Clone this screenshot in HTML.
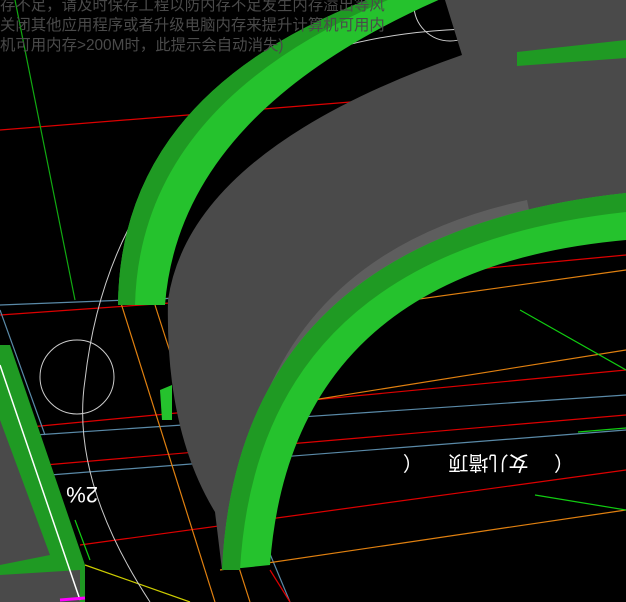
<!DOCTYPE html>
<html><head><meta charset="utf-8"><style>
html,body{margin:0;padding:0;background:#000;width:626px;height:602px;overflow:hidden}
svg{display:block}
.t{font-family:"Liberation Sans","Noto Sans CJK SC",sans-serif;font-size:15.4px;fill:#4a4a4a}
</style></head><body>
<svg width="626" height="602" viewBox="0 0 626 602">
<rect width="626" height="602" fill="#000"/>
<g stroke-width="1.2" fill="none">
<path d="M0,130 L626,80" stroke="#d00"/>
<path d="M0,315 L170,303" stroke="#d00"/>
<path d="M30,427 L626,370" stroke="#d00"/>
<path d="M45,465 L626,415" stroke="#d00"/>
<path d="M80,545 L626,470" stroke="#d00"/>
<path d="M150,300 L626,255" stroke="#d00"/>
<path d="M0,305 L180,298" stroke="#5a8aa8"/>
<path d="M35,435 L626,395" stroke="#5a8aa8"/>
<path d="M50,475 L626,430" stroke="#5a8aa8"/>
<path d="M0,310 L45,435" stroke="#5a8aa8"/>
<path d="M260,530 L290,602" stroke="#5a8aa8"/>
<path d="M120,300 L215,602" stroke="#e08010"/>
<path d="M155,305 L250,602" stroke="#e08010"/>
<path d="M220,570 L626,510" stroke="#e08010"/>
<path d="M250,410 L626,350" stroke="#e08010"/>
<path d="M270,320 L626,270" stroke="#e08010"/>
<path d="M270,570 L290,602" stroke="#d00"/>
<path d="M85,565 L190,602" stroke="#cc0"/>
<path d="M0,465 L35,462" stroke="#ee0"/>
<path d="M520,310 L626,370" stroke="#1c1"/>
<path d="M535,495 L626,510" stroke="#1c1"/>
<path d="M578,432 L626,428" stroke="#1c1"/>
<path d="M15,0 L75,300" stroke="#1a1"/>
<path d="M75,520 L90,560" stroke="#1c1"/>
</g>
<g stroke="#ccc" stroke-width="1" fill="none">
<circle cx="77" cy="377" r="37"/>
<circle cx="450" cy="5" r="36"/>
<path d="M150,602 Q70,480 85,380 Q110,160 300,60 Q430,10 626,40"/>
</g>
<path d="M445,0 L626,0 L626,195 Q240,240 222,570 L215,512 Q165,430 168,300 Q190,150 462,55 Z" fill="#4a4a4a"/>
<path d="M517,52 L626,40 L626,58 L517,66 Z" fill="#1f9a23"/>
<path d="M527,200 Q268,255 238,505 L248,500 Q283,268 529,210 Z" fill="#5e5e5e"/>
<path d="M118,305 Q120,90 380,-5 L450,-5 Q180,110 165,305 Z" fill="#25c22d"/>
<path d="M118,305 Q120,90 380,-5 L400,-5 Q140,100 135,305 Z" fill="#1f9a23"/>
<path d="M160,390 L172,385 L172,420 L162,420 Z" fill="#25c22d"/>
<path d="M222,570 Q238,235 626,193 L626,240 Q292,270 270,565 Z" fill="#25c22d"/>
<path d="M222,570 Q238,235 626,193 L626,212 Q258,252 240,570 Z" fill="#1f9a23"/>
<path d="M0,345 L10,345 L85,565 L85,602 L0,602 Z" fill="#1f9a23"/>
<path d="M0,420 L50,555 L0,565 Z" fill="#4a4a4a"/>
<path d="M0,575 L80,570 L80,602 L0,602 Z" fill="#4a4a4a"/>
<path d="M0,365 L80,600" stroke="#fff" stroke-width="1.5"/>
<path d="M60,600 L85,598" stroke="#f0f" stroke-width="3"/>
<g transform="rotate(180 487 463)"><text x="400" y="470" fill="#fff" font-family="Liberation Sans,Noto Sans CJK SC,sans-serif" font-size="20">（　 女儿墙顶　 （</text></g>
<g transform="rotate(180 78 495)"><text x="58" y="503" fill="#fff" font-family="Liberation Sans,sans-serif" font-size="22">2%</text></g>
<text class="t" x="0" y="10">存不足，请及时保存工程以防内存不足发生内存溢出等风</text>
<text class="t" x="0" y="30">关闭其他应用程序或者升级电脑内存来提升计算机可用内</text>
<text class="t" x="0" y="50">机可用内存&gt;200M时，此提示会自动消失)</text>
</svg>
</body></html>
